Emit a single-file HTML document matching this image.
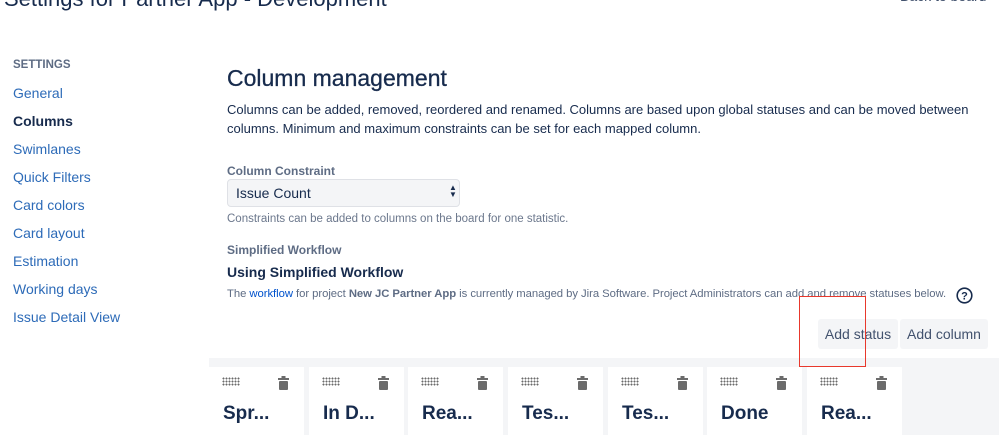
<!DOCTYPE html>
<html><head><meta charset="utf-8"><style>
body{margin:0;width:999px;height:435px;overflow:hidden;background:#fff;font-family:"Liberation Sans",sans-serif;color:#172b4d;position:relative}
.a{position:absolute;white-space:nowrap}
.nav{left:13px;font-size:14px;color:#2d6bb8}
.card{position:absolute;top:367px;width:95px;height:80px;background:#fff}
.card .g{position:absolute;left:13px;top:10px;width:18px;height:9px;background-image:radial-gradient(circle,#6a6a6a 0.9px,transparent 1.1px);background-size:3px 3px}
.card .t{position:absolute;left:69px;top:9px}
.card .n{position:absolute;left:14px;top:36px;font-size:19px;font-weight:bold;color:#172b4d}
.btn{position:absolute;top:319px;height:30px;background:#f4f5f7;border-radius:3px;font-size:14px;color:#42526e;line-height:30px;text-align:center}
</style></head><body>
<div class="a" style="left:4px;top:-14px;font-size:22px;color:#172b4d">Settings for Partner App - Development</div>
<div class="a" style="left:900px;top:-12px;font-size:14px;color:#42526e">Back to board</div>
<div class="a" style="left:13px;top:59px;font-size:11.5px;font-weight:bold;color:#5e6c84">SETTINGS</div>
<div class="a nav" style="top:85px">General</div>
<div class="a" style="left:13px;top:113px;font-size:14px;font-weight:bold;color:#172b4d">Columns</div>
<div class="a nav" style="top:141px">Swimlanes</div>
<div class="a nav" style="top:169px">Quick Filters</div>
<div class="a nav" style="top:197px">Card colors</div>
<div class="a nav" style="top:225px">Card layout</div>
<div class="a nav" style="top:253px">Estimation</div>
<div class="a nav" style="top:281px">Working days</div>
<div class="a nav" style="top:309px">Issue Detail View</div>
<div class="a" style="left:227px;top:65px;font-size:23px;color:#172b4d;-webkit-text-stroke:0.3px #172b4d">Column management</div>
<div class="a" style="left:227px;top:100px;font-size:13px;line-height:19px;color:#172b4d">Columns can be added, removed, reordered and renamed. Columns are based upon global statuses and can be moved between<br>columns. Minimum and maximum constraints can be set for each mapped column.</div>
<div class="a" style="left:227px;top:164px;font-size:12px;font-weight:bold;color:#5e6c84">Column Constraint</div>
<div class="a" style="left:227px;top:179px;width:231px;height:26px;background:#f4f5f7;border:1px solid #dfe1e6;border-radius:4px"></div>
<div class="a" style="left:236px;top:185px;font-size:14px;color:#172b4d">Issue Count</div>
<div class="a" style="left:449px;top:184px;font-size:8px;line-height:7px;color:#172b4d">▲<br>▼</div>
<div class="a" style="left:227px;top:213px;font-size:11.5px;color:#6b778c">Constraints can be added to columns on the board for one statistic.</div>
<div class="a" style="left:227px;top:243px;font-size:12px;font-weight:bold;color:#5e6c84">Simplified Workflow</div>
<div class="a" style="left:227px;top:264px;font-size:14px;font-weight:bold;color:#172b4d">Using Simplified Workflow</div>
<div class="a" style="left:227px;top:288px;font-size:11.3px;letter-spacing:-0.05px;color:#5e6c84">The <span style="color:#0052cc">workflow</span> for project <b>New JC Partner App</b> is currently managed by Jira Software. Project Administrators can add and remove statuses below.</div>
<svg class="a" style="left:956px;top:287px" width="17" height="17" viewBox="0 0 17 17"><circle cx="8.5" cy="8.5" r="7.3" fill="none" stroke="#172b4d" stroke-width="1.6"/><text x="8.5" y="12.5" text-anchor="middle" font-size="11" font-weight="bold" font-family="Liberation Sans" fill="#172b4d">?</text></svg>
<div class="btn" style="left:818px;width:80px">Add status</div>
<div class="btn" style="left:900px;width:88px">Add column</div>
<div class="a" style="left:209px;top:358px;width:790px;height:77px;background:#f4f5f7"></div>
<div class="a" style="left:799px;top:296px;width:65px;height:69px;border:1.5px solid #e8382c;z-index:5"></div>
<div class="card" style="left:209px"><div class="g"></div><svg class="t" width="11" height="14" viewBox="0 0 11 14"><rect x="0" y="2" width="11" height="2" fill="#6b6b6b"/><rect x="3.5" y="0" width="4" height="2" fill="#6b6b6b"/><rect x="1" y="5" width="9" height="9" rx="1" fill="#6b6b6b"/></svg><div class="n">Spr...</div></div>
<div class="card" style="left:309px"><div class="g"></div><svg class="t" width="11" height="14" viewBox="0 0 11 14"><rect x="0" y="2" width="11" height="2" fill="#6b6b6b"/><rect x="3.5" y="0" width="4" height="2" fill="#6b6b6b"/><rect x="1" y="5" width="9" height="9" rx="1" fill="#6b6b6b"/></svg><div class="n">In D...</div></div>
<div class="card" style="left:408px"><div class="g"></div><svg class="t" width="11" height="14" viewBox="0 0 11 14"><rect x="0" y="2" width="11" height="2" fill="#6b6b6b"/><rect x="3.5" y="0" width="4" height="2" fill="#6b6b6b"/><rect x="1" y="5" width="9" height="9" rx="1" fill="#6b6b6b"/></svg><div class="n">Rea...</div></div>
<div class="card" style="left:508px"><div class="g"></div><svg class="t" width="11" height="14" viewBox="0 0 11 14"><rect x="0" y="2" width="11" height="2" fill="#6b6b6b"/><rect x="3.5" y="0" width="4" height="2" fill="#6b6b6b"/><rect x="1" y="5" width="9" height="9" rx="1" fill="#6b6b6b"/></svg><div class="n">Tes...</div></div>
<div class="card" style="left:608px"><div class="g"></div><svg class="t" width="11" height="14" viewBox="0 0 11 14"><rect x="0" y="2" width="11" height="2" fill="#6b6b6b"/><rect x="3.5" y="0" width="4" height="2" fill="#6b6b6b"/><rect x="1" y="5" width="9" height="9" rx="1" fill="#6b6b6b"/></svg><div class="n">Tes...</div></div>
<div class="card" style="left:707px"><div class="g"></div><svg class="t" width="11" height="14" viewBox="0 0 11 14"><rect x="0" y="2" width="11" height="2" fill="#6b6b6b"/><rect x="3.5" y="0" width="4" height="2" fill="#6b6b6b"/><rect x="1" y="5" width="9" height="9" rx="1" fill="#6b6b6b"/></svg><div class="n">Done</div></div>
<div class="card" style="left:807px"><div class="g"></div><svg class="t" width="11" height="14" viewBox="0 0 11 14"><rect x="0" y="2" width="11" height="2" fill="#6b6b6b"/><rect x="3.5" y="0" width="4" height="2" fill="#6b6b6b"/><rect x="1" y="5" width="9" height="9" rx="1" fill="#6b6b6b"/></svg><div class="n">Rea...</div></div>
</body></html>
